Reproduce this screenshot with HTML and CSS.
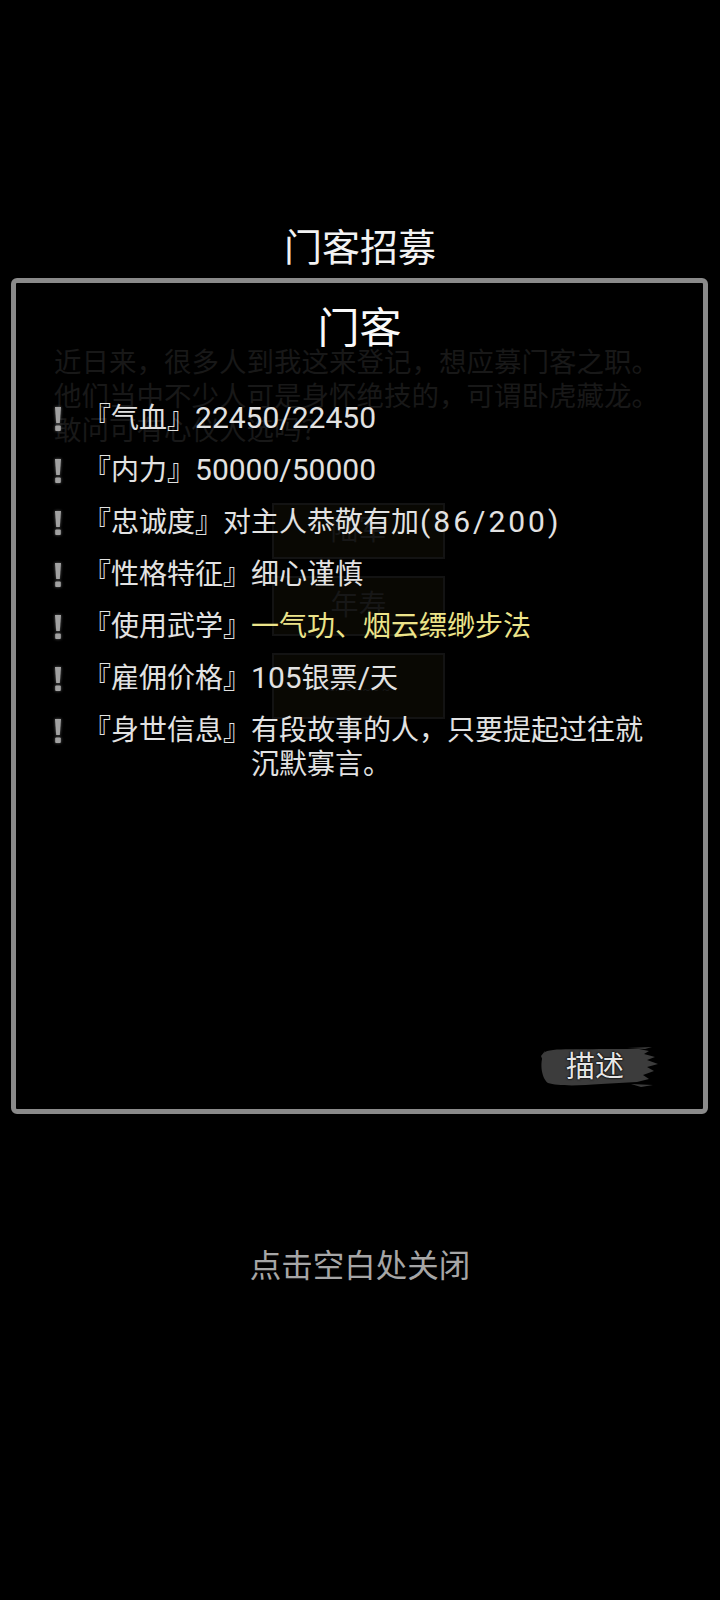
FILE: index.html
```html
<!DOCTYPE html>
<html lang="zh-CN">
<head>
<meta charset="utf-8">
<title>门客招募</title>
<link rel="stylesheet" href="styles.css">
</head>
<body>
<div class="screen">
  <h1 class="title">门客招募</h1>
  <div class="panel">
    <div class="ghost">
      <p class="ghost-line">近日来，很多人到我这来登记，想应募门客之职。</p>
      <p class="ghost-line">他们当中不少人可是身怀绝技的，可谓卧虎藏龙。</p>
      <p class="ghost-line">敢问可有心仪人选吗？</p>
      <div class="ghost-btns">
        <div class="ghost-btn b1">陆军</div>
        <div class="ghost-btn b2">年寿</div>
        <div class="ghost-btn b3"><span class="ghost-small">~~~ ~~~ ~</span></div>
      </div>
    </div>
    <div class="content">
      <h2 class="heading">门客</h2>
      <ul class="stats">
        <li class="stat"><span class="mark"><svg viewBox="0 0 8 24" width="8" height="24"><path d="M1 0 H7 L5.8 16 H2.2 Z"/><rect x="1.2" y="18.5" width="5.6" height="5.5" rx="1"/></svg></span><span class="label">『气血』</span><span class="value"><span class="num">22450/22450</span></span></li>
        <li class="stat"><span class="mark"><svg viewBox="0 0 8 24" width="8" height="24"><path d="M1 0 H7 L5.8 16 H2.2 Z"/><rect x="1.2" y="18.5" width="5.6" height="5.5" rx="1"/></svg></span><span class="label">『内力』</span><span class="value"><span class="num">50000/50000</span></span></li>
        <li class="stat"><span class="mark"><svg viewBox="0 0 8 24" width="8" height="24"><path d="M1 0 H7 L5.8 16 H2.2 Z"/><rect x="1.2" y="18.5" width="5.6" height="5.5" rx="1"/></svg></span><span class="label">『忠诚度』</span><span class="value">对主人恭敬有加<span class="num num-wide">(86/200)</span></span></li>
        <li class="stat"><span class="mark"><svg viewBox="0 0 8 24" width="8" height="24"><path d="M1 0 H7 L5.8 16 H2.2 Z"/><rect x="1.2" y="18.5" width="5.6" height="5.5" rx="1"/></svg></span><span class="label">『性格特征』</span><span class="value">细心谨慎</span></li>
        <li class="stat"><span class="mark"><svg viewBox="0 0 8 24" width="8" height="24"><path d="M1 0 H7 L5.8 16 H2.2 Z"/><rect x="1.2" y="18.5" width="5.6" height="5.5" rx="1"/></svg></span><span class="label">『使用武学』</span><span class="value value-yellow">一气功、烟云缥缈步法</span></li>
        <li class="stat"><span class="mark"><svg viewBox="0 0 8 24" width="8" height="24"><path d="M1 0 H7 L5.8 16 H2.2 Z"/><rect x="1.2" y="18.5" width="5.6" height="5.5" rx="1"/></svg></span><span class="label">『雇佣价格』</span><span class="value"><span class="num">105</span>银票<span class="num">/</span>天</span></li>
        <li class="stat"><span class="mark"><svg viewBox="0 0 8 24" width="8" height="24"><path d="M1 0 H7 L5.8 16 H2.2 Z"/><rect x="1.2" y="18.5" width="5.6" height="5.5" rx="1"/></svg></span><span class="label">『身世信息』</span><span class="value">有段故事的人，只要提起过往就沉默寡言。</span></li>
      </ul>
      <div class="desc-btn">
        <svg class="brush" viewBox="0 0 120 42" width="120" height="42">
          <path d="M6 6 C14 2 34 4 60 3 L100 3 L110 5 L105 8 L116 11 L108 14 L119 18 L108 21 L115 25 L104 29 L110 33 L98 36 L62 38 C38 40 18 40 9 37 C2 32 0 14 6 6 Z"/>
          <path d="M88 2 L113 1 L106 3 Z M92 38 L114 39 L102 41 Z M2 10 L6 5 L4 15 Z"/>
        </svg>
        <span class="desc-text">描述</span>
      </div>
    </div>
  </div>
  <p class="close-hint">点击空白处关闭</p>
</div>
</body>
</html>
```
FILE: styles.css
```css
* { box-sizing: border-box; }
html, body {
  margin: 0;
  padding: 0;
  background: #000;
}
body {
  width: 720px;
  height: 1600px;
  overflow: hidden;
  font-family: Roboto, "Noto Sans CJK SC", "Noto Sans", sans-serif;
  color: #e4e4e4;
}
.screen {
  display: flex;
  flex-direction: column;
  padding-top: 223px;
}
.title {
  margin: 0;
  font-size: 38px;
  font-weight: 400;
  line-height: 50px;
  text-align: center;
  color: #f2f2f2;
}
.panel {
  margin: 5px 12px 0 11px;
  height: 836px;
  border: 5px solid #8a8a8a;
  border-radius: 6px;
  background: #000;
  display: grid;
  grid-template-columns: 1fr;
  grid-template-rows: 1fr;
}
.ghost, .content {
  grid-area: 1 / 1;
}
.ghost {
  padding: 63px 0 0 38px;
  color: #181818;
  font-size: 27.5px;
  line-height: 34px;
}
.ghost-line {
  margin: 0;
  white-space: nowrap;
}
.ghost-btns {
  margin: 55px 0 0 218px;
  width: 173px;
  display: flex;
  flex-direction: column;
  gap: 17px;
}
.ghost-btn {
  border: 2px solid #131313;
  background: #090803;
  display: flex;
  align-items: center;
  justify-content: center;
  font-size: 28px;
  color: #171717;
}
.b1 { height: 56px; }
.b2 { height: 60px; }
.b3 { height: 66px; }
.ghost-small { font-size: 12px; align-self: flex-end; margin-bottom: 10px; }
.content {
  display: flex;
  flex-direction: column;
}
.heading {
  margin: 20px 0 0;
  font-size: 42px;
  font-weight: 400;
  line-height: 52px;
  text-align: center;
  color: #fafafa;
}
.stats {
  list-style: none;
  margin: 47px 0 0;
  padding: 0 0 0 32px;
  display: flex;
  flex-direction: column;
  gap: 18px;
}
.stat {
  display: flex;
  align-items: flex-start;
  font-size: 28px;
  line-height: 34px;
  color: #e2e2e2;
}
.num {
  font-size: 30px;
  line-height: 1;
}
.num-wide {
  letter-spacing: 3px;
  margin-left: 1px;
}
.mark {
  flex: 0 0 35px;
  height: 34px;
  display: flex;
  align-items: center;
  padding-left: 6px;
}
.mark svg {
  fill: #a2a2a2;
  filter: drop-shadow(0 0 1.5px #666);
}
.label {
  flex: 0 0 auto;
  white-space: nowrap;
}
.value {
  flex: 0 1 auto;
  max-width: 405px;
}
.value-yellow {
  color: #ece48a;
}
.desc-btn {
  margin-top: auto;
  margin-right: 44px;
  margin-bottom: 21px;
  align-self: flex-end;
  width: 120px;
  height: 42px;
  display: grid;
}
.brush, .desc-text {
  grid-area: 1 / 1;
}
.brush {
  fill: #3c3c3c;
}
.desc-text {
  display: flex;
  align-items: center;
  justify-content: center;
  padding-right: 8px;
  font-size: 29px;
  line-height: 42px;
  color: #e6e6e6;
  text-shadow: 0 0 2px #000, 0 0 2px #000;
}
.close-hint {
  margin: 133px 0 0;
  font-size: 31.5px;
  line-height: 40px;
  text-align: center;
  color: #a6a6a6;
}
```
